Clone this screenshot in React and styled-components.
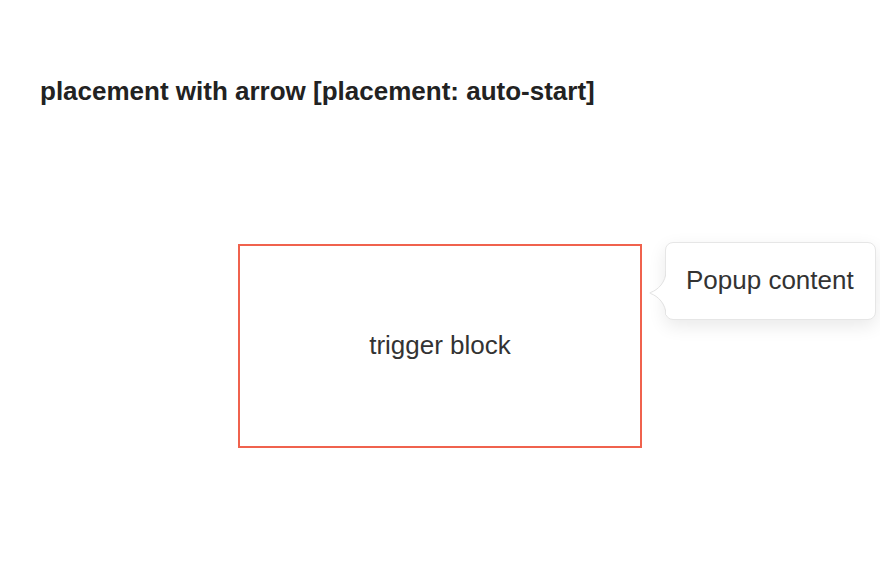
import React from 'react';
import styled, { createGlobalStyle } from 'styled-components';

const GlobalStyle = createGlobalStyle`
  html, body {
    margin: 0;
    padding: 0;
    background: #fff;
  }
  body {
    font-family: "Liberation Sans", Arial, sans-serif;
    color: #333;
  }
`;

const Page = styled.div`
  width: 880px;
  height: 586px;
  padding: 76px 40px 0;
  box-sizing: border-box;
  overflow: hidden;
`;

const Title = styled.h2`
  margin: 0;
  font-size: 26px;
  font-weight: 700;
  line-height: 30px;
  color: #222;
`;

const Stage = styled.div`
  display: flex;
  justify-content: center;
  margin-top: 138px;
`;

const Anchor = styled.div`
  position: relative;
`;

const Trigger = styled.div`
  width: 400px;
  height: 200px;
  box-sizing: content-box;
  border: 2px solid #f0624d;
  display: flex;
  align-items: center;
  justify-content: center;
  font-size: 26px;
  color: #333;
  padding-bottom: 0;
  & > span {
    margin-bottom: 2px;
  }
`;

const Popup = styled.div`
  position: absolute;
  left: calc(100% + 23px);
  top: -2px;
  box-sizing: border-box;
  height: 78px;
  padding: 0 21px 2px 20px;
  display: flex;
  align-items: center;
  white-space: nowrap;
  font-size: 26px;
  color: #333;
  background: #fff;
  border: 1px solid #e6e6e6;
  border-radius: 8px;
  box-shadow: 0 6px 18px rgba(0, 0, 0, 0.09);
`;

const Arrow = styled.svg`
  position: absolute;
  left: -17px;
  top: 28px;
  overflow: visible;
`;

function Tip() {
  return (
    <Arrow width="18" height="44" viewBox="0 0 18 44">
      <path
        d="M17 0 C17 11, 9 19, 1.5 21.5 C0.5 21.8, 0.5 22.2, 1.5 22.5 C9 25, 17 33, 17 44 Z"
        fill="#fff"
      />
      <path
        d="M17 0 C17 11, 9 19, 1.5 21.5 C0.5 21.8, 0.5 22.2, 1.5 22.5 C9 25, 17 33, 17 44"
        fill="none"
        stroke="#e2e2e2"
        strokeWidth="1"
      />
      <rect x="17" y="0" width="2" height="44" fill="#fff" />
    </Arrow>
  );
}

export default function App() {
  return (
    <>
      <GlobalStyle />
      <Page>
        <Title>placement with arrow [placement: auto-start]</Title>
        <Stage>
          <Anchor>
            <Trigger>
              <span>trigger block</span>
            </Trigger>
            <Popup>
              <Tip />
              Popup content
            </Popup>
          </Anchor>
        </Stage>
      </Page>
    </>
  );
}
